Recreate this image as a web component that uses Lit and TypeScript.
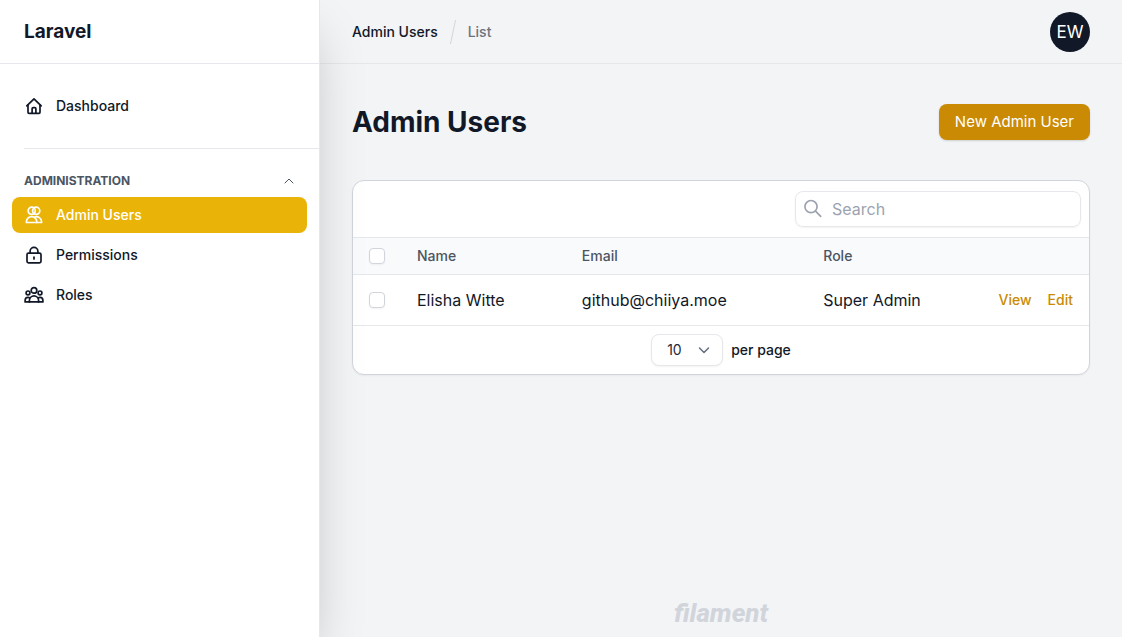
import { LitElement, html, css, svg } from "lit";
import { customElement, property, state } from "lit/decorators.js";
import { classMap } from "lit/directives/class-map.js";

const icons = {
  home: svg`
    <path d="M2.8 9.9 10 2.8l7.2 7.1" />
    <path d="M4 8.9v7.4c0 .6.4 1 1 1h10c.6 0 1-.4 1-1V8.9" />
    <path d="M8.1 17v-4.2c0-.7.5-1.2 1.2-1.2h1.4c.7 0 1.2.5 1.2 1.2V17" />`,
  users: svg`
    <circle cx="7.7" cy="5.8" r="3.6" />
    <circle cx="12.2" cy="5.8" r="3.6" />
    <path d="M2.4 17.5v-.7a5.2 5.2 0 0 1 10.4 0v.7Z" />
    <path d="M10.8 12a5.2 5.2 0 0 1 6.8 4.7v.8h-4.8" />`,
  lock: svg`
    <rect x="3" y="8.2" width="14" height="9.6" rx="1.5" />
    <path d="M6.1 8.2V6.3a3.9 3.9 0 0 1 7.8 0v1.9" />
    <path d="M10 12.2v1.8" />`,
  group: svg`
    <circle cx="10" cy="5.4" r="2.8" />
    <circle cx="4" cy="7.9" r="1.9" />
    <circle cx="16" cy="7.9" r="1.9" />
    <path d="M5.4 16.9v-1.4a4.6 4.6 0 0 1 9.2 0v1.4Z" />
    <path d="M5.4 16.9H1.1v-1.5c0-1.8 1.3-3 2.9-3 .7 0 1.3.2 1.8.6" />
    <path d="M14.6 16.9h4.3v-1.5c0-1.8-1.3-3-2.9-3-.7 0-1.3.2-1.8.6" />`,
};

type IconName = keyof typeof icons;

@customElement("nav-item")
class NavItem extends LitElement {
  @property() label = "";
  @property() icon: IconName = "home";
  @property({ type: Boolean }) active = false;

  static styles = css`
    :host { display: block; }
    .link {
      display: flex;
      align-items: center;
      gap: 12px;
      padding: 8px 12px;
      border-radius: 8px;
      color: #111827;
      font-size: 14px;
      line-height: 20px;
      font-weight: 500;
      text-decoration: none;
    }
    .link:hover { background: #f3f4f6; }
    .link.active { background: #eab308; color: #fff; }
    .icon {
      width: 20px;
      height: 20px;
      flex: none;
      fill: none;
      stroke: currentColor;
      stroke-width: 1.7;
      stroke-linecap: round;
      stroke-linejoin: round;
    }
  `;

  render() {
    return html`<a href="#" class=${classMap({ link: true, active: this.active })}>
      <svg class="icon" viewBox="0 0 20 20" aria-hidden="true">${icons[this.icon]}</svg>
      <span>${this.label}</span>
    </a>`;
  }
}

@customElement("side-bar")
class SideBar extends LitElement {
  @state() open = true;

  static styles = css`
    :host {
      display: flex;
      flex-direction: column;
      box-sizing: border-box;
      background: #fff;
      border-right: 1px solid #e5e7eb;
      box-shadow: 0 25px 50px -12px rgba(0, 0, 0, 0.25);
      z-index: 1;
    }
    .brand {
      display: flex;
      align-items: center;
      box-sizing: border-box;
      height: 64px;
      padding: 0 24px;
      border-bottom: 1px solid #e5e7eb;
    }
    .brand a {
      color: #111827;
      font-size: 19px;
      line-height: 28px;
      font-weight: 700;
      text-decoration: none;
    }
    .nav { padding: 24px 0; }
    .items { display: grid; gap: 4px; padding: 0 12px; }
    .divider { margin: 24px 0 0 24px; border: 0; border-top: 1px solid #e5e7eb; }
    .heading {
      display: flex;
      align-items: center;
      justify-content: space-between;
      box-sizing: border-box;
      width: 100%;
      margin-top: 24px;
      padding: 0 24px;
      border: 0;
      background: none;
      color: #4b5563;
      font: inherit;
      font-size: 12px;
      line-height: 16px;
      font-weight: 700;
      text-transform: uppercase;
      cursor: pointer;
    }
    .group { padding-top: 8px; }
    .chevron { width: 12px; height: 12px; fill: none; stroke: currentColor; stroke-linecap: round; stroke-linejoin: round; }
  `;

  render() {
    return html`
      <div class="brand"><a href="#">Laravel</a></div>
      <nav class="nav">
        <div class="items"><nav-item label="Dashboard" icon="home"></nav-item></div>
        <hr class="divider" />
        <button class="heading" aria-expanded=${this.open} @click=${() => (this.open = !this.open)}>
          Administration
          <svg class="chevron" viewBox="0 0 12 12" aria-hidden="true"><path d="M2 8l4-4 4 4" /></svg>
        </button>
        ${this.open
          ? html`<div class="items group">
              <nav-item label="Admin Users" icon="users" active></nav-item>
              <nav-item label="Permissions" icon="lock"></nav-item>
              <nav-item label="Roles" icon="group"></nav-item>
            </div>`
          : null}
      </nav>
    `;
  }
}

@customElement("users-table")
class UsersTable extends LitElement {
  rows = [{ name: "Elisha Witte", email: "github@chiiya.moe", role: "Super Admin" }];

  static styles = css`
    :host {
      display: block;
      overflow: hidden;
      background: #fff;
      border: 1px solid #d1d5db;
      border-radius: 12px;
      box-shadow: 0 1px 2px rgba(0, 0, 0, 0.05);
    }
    .toolbar { display: flex; justify-content: flex-end; padding: 10px 8px; }
    .search {
      display: flex;
      align-items: center;
      gap: 8px;
      box-sizing: border-box;
      width: 286px;
      height: 36px;
      padding: 0 8px;
      border: 1px solid #e5e7eb;
      border-radius: 8px;
      box-shadow: 0 1px 2px rgba(0, 0, 0, 0.05);
    }
    .glass { width: 20px; height: 20px; flex: none; fill: none; stroke: #9ca3af; stroke-width: 1.7; stroke-linecap: round; }
    .field {
      flex: 1;
      min-width: 0;
      padding: 0;
      border: 0;
      outline: 0;
      background: none;
      color: #111827;
      font: inherit;
      font-size: 16px;
      line-height: 24px;
    }
    .field::placeholder { color: #9ca3af; opacity: 1; }
    .table { width: 100%; border-collapse: collapse; table-layout: fixed; text-align: left; }
    .col-check { width: 48px; }
    .col-name { width: 22.4%; }
    .col-email { width: 32.8%; }
    th {
      height: 36px;
      padding: 0 16px;
      background: #f9fafb;
      border-top: 1px solid #e5e7eb;
      color: #4b5563;
      font-size: 14px;
      line-height: 20px;
      font-weight: 500;
    }
    td {
      height: 50px;
      padding: 0 16px;
      border-top: 1px solid #e5e7eb;
      border-bottom: 1px solid #e5e7eb;
      color: #111827;
      font-size: 16px;
      line-height: 24px;
    }
    .check {
      appearance: none;
      display: block;
      box-sizing: border-box;
      width: 16px;
      height: 16px;
      margin: 0;
      background: #fff;
      border: 1px solid #d1d5db;
      border-radius: 4px;
      box-shadow: 0 1px 2px rgba(0, 0, 0, 0.05);
    }
    .check:checked { background: #ca8a04; border-color: #ca8a04; }
    .actions { display: flex; justify-content: flex-end; gap: 16px; }
    .actions a { color: #ca8a04; font-size: 14px; line-height: 20px; font-weight: 500; text-decoration: none; }
    .footer { display: flex; align-items: center; justify-content: center; gap: 8px; padding: 8px; }
    .picker { display: grid; align-items: center; }
    .select {
      grid-area: 1 / 1;
      appearance: none;
      box-sizing: border-box;
      width: 72px;
      height: 32px;
      padding: 0 32px 0 15px;
      background: #fff;
      border: 1px solid #e5e7eb;
      border-radius: 8px;
      box-shadow: 0 1px 2px rgba(0, 0, 0, 0.05);
      color: #1f2937;
      font: inherit;
      font-size: 14px;
      line-height: 20px;
    }
    .caret {
      grid-area: 1 / 1;
      justify-self: end;
      width: 20px;
      height: 20px;
      margin-right: 9px;
      fill: none;
      stroke: #6b7280;
      stroke-width: 1.6;
      stroke-linecap: round;
      stroke-linejoin: round;
      pointer-events: none;
    }
    .per-page { color: #111827; font-size: 14px; line-height: 20px; font-weight: 500; }
  `;

  render() {
    return html`
      <div class="toolbar">
        <div class="search">
          <svg class="glass" viewBox="0 0 20 20" aria-hidden="true">
            <circle cx="7" cy="7.6" r="6.1" /><path d="M11.5 12.1l5.2 5.2" />
          </svg>
          <input class="field" type="search" placeholder="Search" aria-label="Search" />
        </div>
      </div>
      <table class="table">
        <colgroup>
          <col class="col-check" /><col class="col-name" /><col class="col-email" /><col /><col />
        </colgroup>
        <thead>
          <tr>
            <th><input class="check" type="checkbox" aria-label="Select all" /></th>
            <th>Name</th>
            <th>Email</th>
            <th>Role</th>
            <th></th>
          </tr>
        </thead>
        <tbody>
          ${this.rows.map(
            (row) => html`<tr>
              <td><input class="check" type="checkbox" aria-label="Select ${row.name}" /></td>
              <td>${row.name}</td>
              <td>${row.email}</td>
              <td>${row.role}</td>
              <td><div class="actions"><a href="#">View</a><a href="#">Edit</a></div></td>
            </tr>`
          )}
        </tbody>
      </table>
      <div class="footer">
        <div class="picker">
          <select class="select" id="per-page">
            <option>5</option>
            <option selected>10</option>
            <option>25</option>
            <option>50</option>
          </select>
          <svg class="caret" viewBox="0 0 20 20" aria-hidden="true"><path d="M5.5 8l4.5 4.5L14.5 8" /></svg>
        </div>
        <label class="per-page" for="per-page">per page</label>
      </div>
    `;
  }
}

@customElement("app-root")
class AppRoot extends LitElement {
  static styles = css`
    :host {
      display: grid;
      grid-template-columns: 320px minmax(0, 1fr);
      min-height: 100vh;
      background: #f3f4f6;
      color: #111827;
      font-family: Inter, "Open Sans", sans-serif;
    }
    .page { display: flex; flex-direction: column; }
    .topbar {
      display: flex;
      align-items: center;
      justify-content: space-between;
      box-sizing: border-box;
      height: 64px;
      padding: 0 32px;
      border-bottom: 1px solid #e5e7eb;
    }
    .crumbs { display: flex; align-items: center; gap: 12px; font-size: 14px; line-height: 20px; font-weight: 500; }
    .crumbs a { color: #111827; text-decoration: none; }
    .crumbs a.current { color: #6b7280; }
    .slash { width: 6px; height: 24px; stroke: #d1d5db; }
    .avatar {
      width: 40px;
      height: 40px;
      padding: 0;
      border: 0;
      border-radius: 50%;
      background: #111827;
      color: #fff;
      font: inherit;
      font-size: 17px;
      font-weight: 400;
    }
    .main { flex: 1; display: flex; flex-direction: column; gap: 40px; padding: 40px 32px; }
    .title-row { display: flex; align-items: center; justify-content: space-between; }
    .title { margin: 0; font-size: 28px; line-height: 36px; font-weight: 700; }
    .create {
      height: 36px;
      padding: 0 16px;
      border: 0;
      border-radius: 8px;
      background: #ca8a04;
      box-shadow: 0 1px 2px rgba(0, 0, 0, 0.15);
      color: #fff;
      font: inherit;
      font-size: 15px;
      line-height: 24px;
    }
    .footer { display: flex; justify-content: center; padding: 0 32px 8px; }
    .footer a {
      color: #d1d5db;
      font-family: Roboto, "Noto Sans", sans-serif;
      font-size: 26px;
      line-height: 32px;
      font-weight: 800;
      font-style: italic;
      text-decoration: none;
    }
  `;

  render() {
    return html`
      <side-bar></side-bar>
      <div class="page">
        <header class="topbar">
          <nav class="crumbs" aria-label="Breadcrumb">
            <a href="#">Admin Users</a>
            <svg class="slash" viewBox="0 0 6 24" aria-hidden="true"><path d="M5.5 0L.5 24" /></svg>
            <a href="#" class="current">List</a>
          </nav>
          <button class="avatar" aria-label="User menu">EW</button>
        </header>
        <main class="main">
          <div class="title-row">
            <h1 class="title">Admin Users</h1>
            <button class="create">New Admin User</button>
          </div>
          <users-table></users-table>
        </main>
        <footer class="footer"><a href="#">filament</a></footer>
      </div>
    `;
  }
}
